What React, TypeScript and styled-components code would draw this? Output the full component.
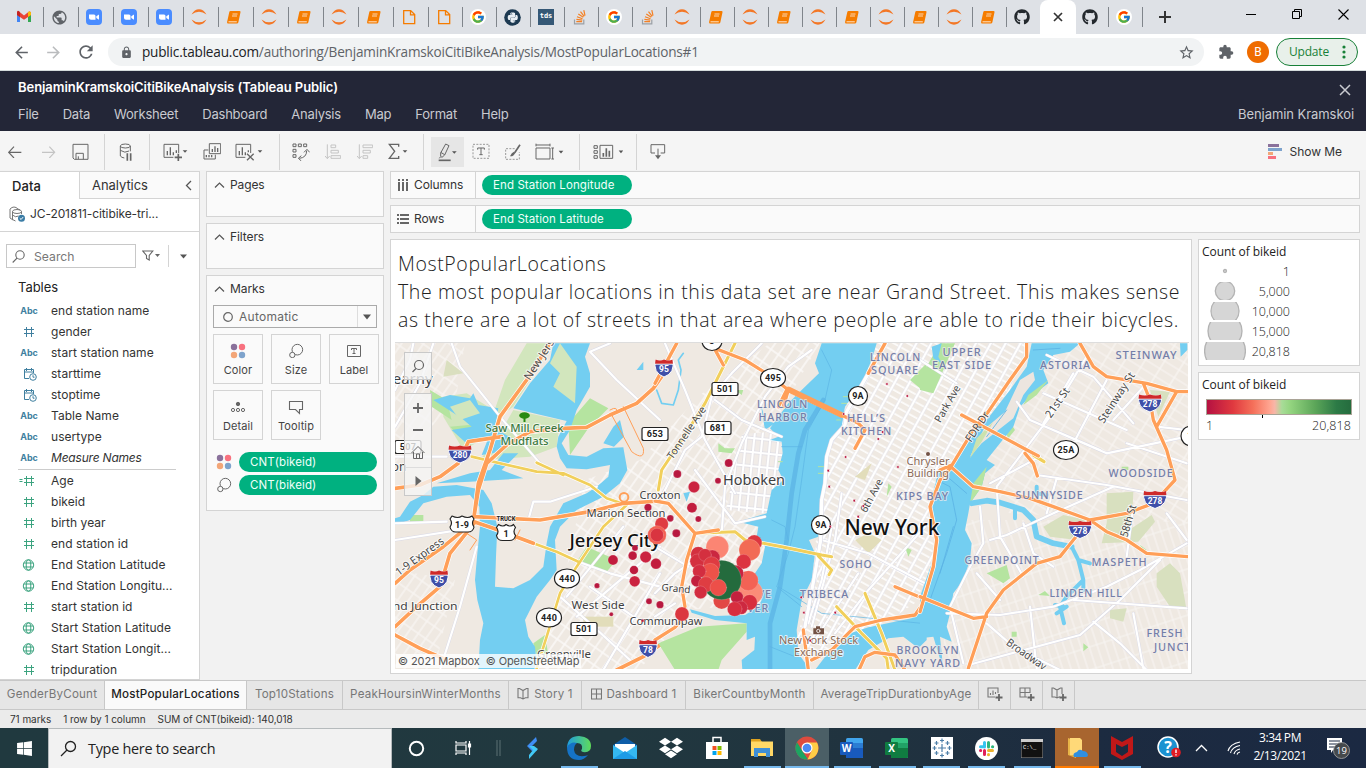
import React from 'react';
import styled, { createGlobalStyle } from 'styled-components';
import { FcGoogle } from 'react-icons/fc';
import { FaGithub, FaDropbox, FaPython, FaWindows } from 'react-icons/fa';
import { MdExtension, MdLock, MdRefresh, MdStarBorder, MdPublic, MdArrowBack, MdArrowForward } from 'react-icons/md';

const Global = createGlobalStyle`
  html, body { margin: 0; padding: 0; }
  body { width: 1366px; height: 768px; overflow: hidden; background: #f2f2f2; }
  * { box-sizing: border-box; }
  svg { display: block; flex: none; }
`;

const ui = `Inter, "Open Sans", sans-serif`;
const segoe = `"Open Sans", "Noto Sans", sans-serif`;

const Page = styled.div`
  width: 1366px; height: 768px; display: flex; flex-direction: column;
  font-family: ${ui}; font-size: 12px; color: #333; white-space: nowrap; overflow: hidden;
`;

/* ---------- browser chrome ---------- */
const TabStrip = styled.div`
  height: 34px; background: #dee1e6; display: flex; padding-left: 9px; flex: none;
`;
const BrowserTab = styled.div<{ $w: number; $sep: boolean }>`
  width: ${p => p.$w}px; height: 34px; padding-left: 7px; display: flex; align-items: center; flex: none;
  background: linear-gradient(#80858b, #80858b) right 0 top 7px / ${p => (p.$sep ? '1px 20px' : '0 0')} no-repeat;
`;
const ActiveTab = styled.div`
  width: 36px; height: 34px; margin-left: -1px; margin-right: -1px; background: #fff; border-radius: 8px 8px 0 0; flex: none;
  display: flex; align-items: center; justify-content: center;
`;
const PlusCell = styled.div`width: 44px; display: flex; align-items: center; justify-content: center; height: 34px;`;
const WindowControls = styled.div`
  margin-left: auto; display: flex; height: 28px; align-items: center;
  > span { width: 46px; display: flex; justify-content: center; }
`;
const TdsIcon = styled.span`
  width: 16px; height: 16px; background: #355876; color: #fff; font: 700 7px/15px "DejaVu Sans Mono", monospace; text-align: center;
`;
const AddressBar = styled.div`
  height: 37px; background: #fff; border-bottom: 1px solid #d5dcdc; display: flex; align-items: center; flex: none;
  padding-left: 12px; color: #5f6368;
`;
const NavIcon = styled.span<{ $w: number; $dim?: boolean }>`
  width: ${p => p.$w}px; display: flex; color: ${p => (p.$dim ? '#babcbe' : '#5f6368')};
`;
const UrlField = styled.div`
  width: 1096px; height: 28px; border-radius: 14px; background: #f1f3f4; display: flex; align-items: center;
  padding: 0 9px 0 12px; font: 13.6px ${segoe}; letter-spacing: -0.2px; color: #5f6368;
  b { font-weight: 400; color: #202124; }
  p { margin: 0 auto 1px 9px; }
`;
const ExtensionSlot = styled.span`padding-left: 14px;`;
const Avatar = styled.span`
  width: 22px; height: 22px; border-radius: 50%; background: #ef6c00; color: #fff; font: 12px/22px Roboto, sans-serif; text-align: center;
  margin: 0 7px 0 13px;
`;
const UpdateButton = styled.span`
  width: 82px; height: 28px; border: 1px solid #188038; border-radius: 14px; background: #e8f0ea; color: #188038;
  font: 12px/26px ${segoe}; letter-spacing: -0.2px; padding-left: 12px; display: flex; align-items: center; justify-content: space-between; padding-right: 11px;
`;

/* ---------- application header ---------- */
const Header = styled.header`
  height: 60px; background: #232637; flex: none; display: flex; justify-content: space-between; padding: 0 12px 0 18px;
`;
const HeaderTitle = styled.div`
  color: #fff; font-weight: 600; font-size: 13px; line-height: 17px; padding-top: 8px; letter-spacing: -0.06px;
`;
const Menu = styled.nav`
  display: flex; gap: 24px; color: #c9cad0; font-size: 13px; line-height: 18px; padding-top: 9px; letter-spacing: -0.22px;
`;
const HeaderRight = styled.div`
  color: #c9cad0; font-size: 13px; display: flex; flex-direction: column; align-items: flex-end; padding-top: 12px;
  line-height: 18px; letter-spacing: -0.06px;
  svg { margin: 1px 3px 9px 0; }
`;

/* ---------- toolbar ---------- */
const Toolbar = styled.div`
  height: 39px; background: #f5f5f5; display: flex; flex: none; align-items: center;
`;
const Tool = styled.div<{ $w: number; $active?: boolean }>`
  width: ${p => p.$w}px; height: 30px; margin-top: 2px; display: flex; align-items: center; justify-content: center; flex: none;
  background: ${p => (p.$active ? '#e6e6e6' : 'transparent')};
`;
const Divider = styled.div<{ $w: number }>`
  width: ${p => p.$w}px; height: 36px; margin-top: 3px; border-right: 1px solid #d4d4d4; flex: none;
`;
const ShowMe = styled.div`
  margin-left: auto; margin-right: 24px; margin-top: 2px; display: flex; gap: 8px; align-items: center; font-size: 12px; color: #333; letter-spacing: -0.05px;
`;

/* ---------- work area ---------- */
const Work = styled.div`height: 510px; background: #f2f2f2; display: flex; flex: none; padding-top: 1px;`;

const DataPane = styled.aside`
  width: 200px; height: 509px; background: #fff; border: solid #d4d4d4; border-width: 0 1px 1px 0; flex: none;
`;
const PaneTabs = styled.div`display: flex; height: 28px; border-top: 1px solid #d4d4d4; font-size: 13px;`;
const PaneTab = styled.div<{ $on?: boolean }>`
  width: ${p => (p.$on ? 79 : 120)}px; line-height: 26px; color: ${p => (p.$on ? '#222' : '#333')};
  letter-spacing: ${p => (p.$on ? 0.1 : -0.05)}px;
  font-weight: ${p => (p.$on ? 500 : 400)};
  padding: 0 ${p => (p.$on ? 0 : 7)}px 0 ${p => (p.$on ? 12 : 12)}px;
  background: ${p => (p.$on ? '#fff' : '#fafafa')};
  border: solid #d4d4d4; border-width: ${p => (p.$on ? '0' : '0 0 1px 1px')};
  display: flex; justify-content: space-between; align-items: center;
`;
const SourceRow = styled.div`
  height: 33px; border-bottom: 1px solid #d4d4d4; display: flex; align-items: center; padding: 0 0 3px 9px; gap: 4px;
  font-size: 12px; color: #333; letter-spacing: -0.1px;
`;
const SearchRow = styled.div`height: 48px; display: flex; align-items: center; padding-left: 6px;`;
const SearchBox = styled.div`
  width: 130px; height: 24px; border: 1px solid #c8c8c8; display: flex; align-items: center; padding-left: 5px; gap: 9px;
  color: #777; font-size: 12.2px; margin-right: 6px;
`;
const Stroke = styled.span`width: 1px; height: 22px; background: #d4d4d4; margin: 0 11px 0 8px;`;
const TablesTitle = styled.div`padding-left: 18px; font-size: 13px; height: 20px; line-height: 15px; color: #222; letter-spacing: -0.05px;`;
const Field = styled.div<{ $italic?: boolean }>`
  height: 21px; display: flex; align-items: center; font-size: 12px; color: #333; letter-spacing: ${p => (p.$italic ? -0.2 : 0.04)}px;
  font-style: ${p => (p.$italic ? 'italic' : 'normal')};
  > span:first-child { width: 51px; padding-left: 19px; display: flex; flex: none; }
`;
const Abc = styled.b`
  width: 20px; text-align: center; font: 700 9px/12px ${ui}; color: #3f7f9f; letter-spacing: -0.1px; font-style: normal;
`;
const FieldRule = styled.div`margin: 1px 23px 0 18px; height: 1px; background: #ccc; `;

const Cards = styled.div`width: 178px; margin-left: 6px; display: flex; flex-direction: column; gap: 6px; flex: none;`;
const Card = styled.section<{ $h: number }>`
  height: ${p => p.$h}px; border: 1px solid #d4d4d4; background: #fafafa; flex: none;
`;
const CardTitle = styled.div`
  display: flex; align-items: center; gap: 5px; height: 26px; padding: 0 0 1px 7px; font-size: 12px; color: #333; letter-spacing: -0.1px;
`;
const MarkType = styled.div`
  width: 164px; height: 23px; margin: 3px 0 6px 6px; border: 1px solid #aaa; display: flex; align-items: center; font-size: 12px;
  color: #666; padding-left: 9px; gap: 6px; letter-spacing: 0.25px; background: #fafafa;
`;
const DropCell = styled.span`
  margin-left: auto; width: 19px; height: 21px; border-left: 1px solid #ddd; display: flex; align-items: center; justify-content: center;
`;
const MarkGrid = styled.div`display: grid; grid-template-columns: repeat(3, 50px); gap: 6px 8px; padding-left: 6px;`;
const MarkButton = styled.div`
  height: 50px; border: 1px solid #d4d4d4; background: #fafafa; display: flex; flex-direction: column; align-items: center; justify-content: space-between;
  padding: 8px 0 4px; font-size: 11px; line-height: 18px; color: #444; letter-spacing: 0.1px;
`;
const MarkPills = styled.div`padding: 12px 0 0 9px; display: flex; flex-direction: column; gap: 3px;`;
const MarkPillRow = styled.div`display: flex; gap: 7px; align-items: center; height: 20px;`;
const Pill = styled.div<{ $w: number }>`
  width: ${p => p.$w}px; height: 20px; border-radius: 10px; background: #00b180; color: #f0fffa; line-height: 21px; padding-left: 11px;
  letter-spacing: 0.1px; font-size: 11.5px;
`;

const Main = styled.div`width: 970px; margin-left: 6px; display: flex; flex-direction: column; gap: 6px;`;
const Shelf = styled.div`height: 28px; border: 1px solid #d4d4d4; background: #fafafa; display: flex; align-items: center;`;
const ShelfName = styled.div`
  width: 85px; height: 26px; border-right: 1px solid #d4d4d4; display: flex; align-items: center; padding: 0 0 1px 6px; gap: 4px; margin-right: 6px;
  font-size: 12px; letter-spacing: -0.1px;
`;
const Canvas = styled.div`display: flex; gap: 6px;`;
const Sheet = styled.div`width: 802px; height: 435px; border: 1px solid #d4d4d4; background: #fff; padding: 10px 0 0 4px;`;
const SheetTitle = styled.div`
  font: 300 19.5px/28px "Open Sans", sans-serif; color: #222; padding-left: 3px; height: 92px; letter-spacing: 0.61px;
`;
const MapBox = styled.div`width: 794px; height: 327px; position: relative; border-top: 1px solid #ddd;`;
const MapTools = styled.div`position: absolute; left: 9px; top: 9px; display: flex; flex-direction: column; gap: 13px;`;
const MapToolGroup = styled.div<{ $h: number }>`
  width: 28px; height: ${p => p.$h}px; background: rgba(245,245,245,.8); border: 1px solid #c9c9c9;
`;
const Credits = styled.div`
  position: absolute; left: 1px; bottom: 1px; height: 14px; background: rgba(255,255,255,.8); color: #555; font-size: 11px; line-height: 14px;
  padding: 0 3px 0 2px; width: 185px; letter-spacing: -0.1px; white-space: pre;
`;
const Legends = styled.div`width: 162px; display: flex; flex-direction: column; gap: 6px;`;
const Legend = styled.div<{ $h: number }>`
  height: ${p => p.$h}px; border: 1px solid #d4d4d4; background: #fff; padding: 3px 0 0 3px; color: #222;
`;
const LegendTitle = styled.div`height: 18px; font: 12px/17px "Open Sans", sans-serif; letter-spacing: -0.05px;`;
const SizeRow = styled.div`
  height: 20px; display: flex; align-items: center; padding-left: 2px; font: 300 12.5px "Open Sans", sans-serif; color: #222;
  span { width: 44px; text-align: right; }
`;
const Ramp = styled.div`
  width: 146px; height: 16px; margin: 5px 0 0 4px; border: 1px solid #a9a396;
  background: linear-gradient(90deg, #b51142, #e0393f 18%, #f5705a 32%, #ffa793 44%, #f7b6a8 47%, #a8dc98 52%, #93d47f 58%, #5ca659 75%, #2c7a46 90%, #256c3e);
`;
const RampLabels = styled.div`
  display: flex; justify-content: space-between; width: 145px; margin-left: 4px; font: 300 12.5px/16px "Open Sans", sans-serif; color: #222; letter-spacing: 0.1px;
`;

/* ---------- sheet tabs and status ---------- */
const SheetTabs = styled.div`
  height: 30px; background: #e6e6e6; border: solid #c8c8c8; border-width: 1px 0; display: flex; flex: none;
`;
const SheetTab = styled.div<{ $w: number; $on?: boolean }>`
  width: ${p => p.$w}px; border-right: 1px solid #c8c8c8; display: flex; align-items: center; justify-content: center; gap: 5px; flex: none;
  font-size: 11.6px; letter-spacing: 0.2px; padding-bottom: 2px;
  font-weight: ${p => (p.$on ? 500 : 400)};
  color: ${p => (p.$on ? '#222' : '#777')}; background: ${p => (p.$on ? '#fafafa' : 'transparent')};
`;
const Status = styled.div`
  height: 18px; background: #ebebeb; display: flex; gap: 12px; padding-left: 10px; font-size: 10px; line-height: 18px; color: #333; flex: none;
  letter-spacing: -0.05px;
`;

/* ---------- desktop taskbar ---------- */
const Taskbar = styled.footer`
  height: 40px; flex: none; display: flex; color: #fff; font-family: ${segoe};
  background: linear-gradient(90deg, #20393f, #21383f 45%, #20323f 65%, #1c2b40 80%, #1b2942);
`;
const Task = styled.div<{ $w: number; $bg?: string; $line?: string }>`
  width: ${p => p.$w}px; height: 40px; display: flex; align-items: center; justify-content: center; flex: none;
  background: ${p => p.$bg ?? 'transparent'};
  background-image: ${p => (p.$line ? `linear-gradient(${p.$line}, ${p.$line})` : 'none')};
  background-size: ${p => (p.$bg ? '100%' : '37px')} 2px; background-position: center bottom; background-repeat: no-repeat;
`;
const TaskSearch = styled.div`
  width: 344px; height: 40px; background: #f2f2f2; border: 1px solid #b5babc; border-bottom: 0; display: flex; align-items: center; flex: none;
  color: #222; font-size: 14.4px; padding-left: 11px; gap: 11px; letter-spacing: -0.27px;
`;
const Clock = styled.div`
  width: 58px; font-size: 12px; line-height: 18px; text-align: center; padding-top: 1px; letter-spacing: -0.4px; margin-left: -8px; flex: none;
`;

/* Icon drawn on a 3x grid: the box is in grid units, the result a third of it. */
const Glyph = ({ box, children, color = '#666', sw = 3 }: { box: [number, number, number, number]; children: React.ReactNode; color?: string; sw?: number }) => (
  <svg width={box[2] / 3} height={box[3] / 3} viewBox={box.join(' ')} fill="none" stroke={color} strokeWidth={sw}>{children}</svg>
);
const Caret = ({ x, y, s = 7 }: { x: number; y: number; s?: number }) => (
  <path d={`M${x - s} ${y - s / 2}h${2 * s}l${-s} ${s + 1}z`} fill="#555" stroke="none" />
);

const Jupyter = () => (
  <svg width="16" height="16" viewBox="0 0 16 16" fill="#f37726"><path d="M.5 5.5Q3.5.3 8 .3T15.500 5.500Q12 2.700 8 2.700T.5 5.500zM.5 10.500Q4 13.300 8 13.300T15.500 10.500Q12.500 15.700 8 15.700T.5 10.500z" /></svg>
);
const Notebook = () => (
  <svg width="16" height="16" viewBox="0 0 16 16"><path d="M4.500 2h9q1.300 0 1 1.200L12.300 13.500q-.3 1-1.300 1H2.200q-1.400 0-1.100-1.500L3.300 3q.2-1 1.200-1z" fill="#f57c00" /><path d="M6.500 5h5M6 7h5" stroke="#fff" strokeWidth=".7" /><path d="M2.500 12.800h8.300" stroke="#fff" strokeWidth=".8" /></svg>
);
const PageIcon = () => (
  <svg width="16" height="16" viewBox="0 0 16 16" fill="none" stroke="#f57c00" strokeWidth="1.300"><path d="M2.700 1.600h7l4 4v9H2.700zM9.500 1.600v4.300h4.300" /></svg>
);
const ZoomIcon = () => (
  <svg width="16" height="16" viewBox="0 0 16 16"><rect width="16" height="16" rx="4" fill="#4a8cff" /><path d="M3 5.500h5q1.500 0 1.500 1.500v3.700H5Q3 10.700 3 9zM10.300 7.300l2.700-1.800v5.200l-2.700-1.800z" fill="#fff" /></svg>
);
const Gmail = () => (
  <svg width="16" height="16" viewBox="0 0 16 16"><path d="M1 4v9h3V7z" fill="#4285f4" /><path d="M12 7v6h3V4z" fill="#34a853" /><path d="M1 4q0-2 2-1.500L8 6.500l5-4q2-.5 2 1.500v2L8 10.700 1 6z" fill="#ea4335" /><path d="M12 3.300l1-.8q2-.5 2 1.500v2l-3 2z" fill="#fbbc04" /><path d="M1 4v2l3 2V3.300Q1-.0 1 4z" fill="#c5221f" /></svg>
);
const StackOverflow = () => (
  <svg width="16" height="16" viewBox="0 0 16 16" fill="none" strokeWidth="1.200"><path d="M2.500 10.500v4.300h9.300v-4.300" stroke="#9ba0a5" /><path d="M4.300 12.700h5.800M4.400 10.400l5.900.7M5 7.700l5.500 2M6.300 5l5 3.300M8.500 2.700l3.700 4.600M11.800 1.200l1.200 5.500" stroke="#f48024" /></svg>
);
const PythonBadge = () => (
  <svg width="17" height="17" viewBox="0 0 17 17"><circle cx="8.500" cy="8.500" r="8.300" fill="#1d3a52" /><g transform="translate(3 2.800) scale(.68)" color="#e8eef3"><FaPython size={17} /></g></svg>
);
const GoogleBadge = () => (
  <svg width="16" height="16" viewBox="0 0 16 16"><circle cx="8" cy="8" r="8" fill="#fff" /><g transform="translate(1 1)"><FcGoogle size={14} /></g></svg>
);
const favicons: Record<string, React.ReactNode> = {
  m: <Gmail />, w: <MdPublic size={17} color="#5f6368" />, z: <ZoomIcon />, j: <Jupyter />, b: <Notebook />, f: <PageIcon />, g: <GoogleBadge />,
  p: <PythonBadge />, t: <TdsIcon>tds</TdsIcon>, s: <StackOverflow />, h: <FaGithub size={16} color="#24292e" />,
};

const SizeGlyph = () => (
  <Glyph box={[864, 526, 48, 46]} color="#666"><circle cx="892" cy="546" r="16" /><circle cx="877" cy="562" r="8" fill="#fafafa" /></Glyph>
);
const ColorGlyph = () => (
  <svg width="16" height="16" viewBox="0 0 16 16"><circle cx="4" cy="4" r="3.200" fill="#8a719b" /><circle cx="12" cy="4" r="3.200" fill="#f8717f" /><circle cx="4" cy="12" r="3.200" fill="#f3a678" /><circle cx="12" cy="12" r="3.200" fill="#7ea3cc" /></svg>
);
const Hash = ({ c, calc }: { c: string; calc?: boolean }) => (
  <svg width="20" height="14" viewBox="0 0 20 14" fill="none" stroke={c} strokeWidth="1"><path d="M5 4.500h10M5 8.500h10M7.500 2v10M12.500 2v10" />{calc && <path d="M.5 5.500h3M.5 7.500h3" />}</svg>
);
const GlobeGlyph = () => (
  <svg width="20" height="14" viewBox="0 0 20 14" fill="none" stroke="#3ba37f" strokeWidth="1"><circle cx="9.500" cy="7" r="5.200" /><ellipse cx="9.500" cy="7" rx="2.300" ry="5.200" /><path d="M5 5h9M5 9h9" /></svg>
);
const DateGlyph = () => (
  <svg width="20" height="14" viewBox="0 0 20 14" fill="none" stroke="#3f7f9f" strokeWidth="1"><path d="M10 11.500H5.500v-9h9V6M5.500 5h9M7.500 1v3M12.500 1v3" /><circle cx="14" cy="10" r="3.300" /><path d="M14 8.200v2h1.500" /></svg>
);
const ChevronUp = () => <svg width="11" height="8" viewBox="0 0 11 8" fill="none" stroke="#555" strokeWidth="1.200"><path d="M1 6.500l4.500-4.500L10 6.500" /></svg>;

const dims: [string, string][] = [
  ['a', 'end station name'], ['#', 'gender'], ['a', 'start station name'], ['d', 'starttime'], ['d', 'stoptime'], ['a', 'Table Name'], ['a', 'usertype'], ['i', 'Measure Names'],
];
const measures: [string, string][] = [
  ['=', 'Age'], ['#', 'bikeid'], ['#', 'birth year'], ['#', 'end station id'], ['g', 'End Station Latitude'], ['g', 'End Station Longitu...'],
  ['#', 'start station id'], ['g', 'Start Station Latitude'], ['g', 'Start Station Longit...'], ['#', 'tripduration'],
];
const fieldIcon = (k: string, c: string) =>
  k === 'a' || k === 'i' ? <Abc>Abc</Abc> : k === 'd' ? <DateGlyph /> : k === 'g' ? <GlobeGlyph /> : <Hash c={c} calc={k === '='} />;

/* ---------- map ---------- */
const WATER = '#73cef1';
/* Three side-by-side map tiles, each digitised at three units per pixel. */
const Tile = ({ x, children }: { x: number; children: React.ReactNode }) => <g transform={`translate(${x} 340) scale(.33333)`}>{children}</g>;
const Roads = ({ d, c, w, edge = '#fff' }: { d: string; c: string; w: number; edge?: string }) => (
  <><path d={d} stroke={edge} strokeWidth={w + 4} /><path d={d} stroke={c} strokeWidth={w} /></>
);
const Streets = ({ d }: { d: string }) => (
  <><path d={d} stroke="#d9d9e6" strokeWidth={9} /><path d={d} stroke="#fff" strokeWidth={6.5} /></>
);
const OR = '#ff9f58', YE = '#f1cf5b';

type Label = [string, number, number, number, number, string, number?];
const labels: Label[] = [
  ['Jersey City', 615, 546.500, 91, 18.500, 'k'], ['Hoboken', 754, 485, 62, 15, 'd'], ['New York', 892, 535, 95, 21.500, 'k'],
  ['Marion Section', 626, 517, 79, 11.500, 'd'], ['Croxton', 660, 499, 41, 11, 'd'], ['West Side', 598, 609, 53, 11.500, 'd'], ['Greenville', 564, 658, 54, 11.500, 'd'],
  ['Communipaw', 666, 625, 73, 11.500, 'd'], ['Grand', 676, 592, 29, 10, 'd', 5], ['Kearny', 408, 384, 49, 14, 'd'], ['on', 399, 471, 15, 13, 'd'],
  ['Upland Junction', 412, 610, 91, 11.500, 'd'],
  ['Saw Mill Creek', 524.500, 432, 78, 11.500, 'g'], ['Mudflats', 524.500, 444.500, 48, 11.500, 'g'],
  ['LINCOLN', 782.500, 408, 51, 11, 'n'], ['HARBOR', 783, 421, 49, 11, 'n'], ['LINCOLN', 895.500, 360.500, 51, 11, 'n'], ['SQUARE', 895, 374, 48, 11, 'n'],
  ['UPPER', 962, 356, 39, 11, 'n'], ['EAST SIDE', 962, 369, 60, 11, 'n'], ['ASTORIA', 1065.500, 369, 51, 11, 'n'], ['STEINWAY', 1146.500, 359, 62, 11, 'n'],
  ['HELL’S', 866.500, 422, 39, 11, 'n'], ['KITCHEN', 866.500, 435, 51, 11, 'n'], ['KIPS BAY', 922.500, 500, 53, 11, 'n'], ['SUNNYSIDE', 1049.500, 499, 68, 11, 'n'],
  ['WOODSIDE', 1141, 477, 65, 11, 'n'], ['SOHO', 856, 567.500, 33, 11, 'n'], ['TRIBECA', 824.500, 598, 49, 11, 'n'], ['GREENPOINT', 1002, 564, 75, 11, 'n'],
  ['MASPETH', 1119.500, 566, 56, 11, 'n'], ['LINDEN HILL', 1086, 597, 73, 11, 'n'], ['FRESH', 1165, 637, 37, 11, 'n'], ['JUNCTION', 1184.500, 650.500, 61, 11, 'n'],
  ['BROOKLYN', 928, 654, 63, 11, 'n'], ['NAVY YARD', 928, 667, 66, 11, 'n'], ['GROVE', 752, 598, 40, 11, 'n'], ['RIVER', 752, 611.500, 34, 11, 'n'],
  ['Chrysler', 928, 464.500, 43, 11, 'b'], ['Building', 928, 477, 42, 11, 'b'], ['New York Stock', 818.500, 644, 79, 11, 'b'], ['Exchange', 818.500, 656, 49, 11, 'b'],
  ['New Jersey', 543, 358, 58, 11, 'r', -57], ['Tonnelle Ave', 687, 436, 61, 10.500, 'r', -56], ['1-9 Express', 420, 560, 57, 11, 'r', -36],
  ['6th Ave', 872, 499, 36, 10.500, 'r', -62], ['Park Ave', 948, 407, 41, 10.500, 'r', -60], ['FDR Dr', 978, 430, 34, 11, 'r', -56], ['21st St', 1058, 406, 34, 11, 'r', -55],
  ['Steinway St', 1117, 401, 58, 11, 'r', -57], ['58th St', 1129, 524, 33, 11, 'r', -74], ['Broadway', 1026, 658, 46, 11, 'r', 35],
  ['TRUCK', 506, 521, 19, 7.200, 't'],
];
const labelColor: Record<string, string> = { k: '#111', d: '#3f3f42', g: '#3d7a42', n: '#747ea8', b: '#8a6a58', r: '#4b4b4b', t: '#222' };

const shields: [string, number, number][] = [['95', 664, 368], ['280', 460, 454], ['95', 439, 579], ['78', 648, 648.500], ['278', 1150, 403], ['278', 1155, 499.500], ['278', 1080, 529.500]];
const ovals: [string, number, number, number][] = [['495', 773, 378, 12.500], ['440', 567, 578.500, 12.500], ['440', 549, 617.500, 12.500], ['9A', 858, 396, 9.500], ['9A', 821, 525, 9.500], ['25A', 1066, 450, 12.500], ['3', 712, 341, 10], ['1', 1190, 436, 9]];
const boxes: [string, number, number][] = [['501', 725, 389], ['681', 718, 428], ['653', 655, 434], ['501', 584, 629], ['507', 408, 447]];

const dots: [number, number, number, string][] = [
  [221, 369, 12, '#b8183f'], [67, 402, 12, '#b8183f'], [189, 422, 9, '#b8183f'], [117, 441, 17, '#cb2340'], [111, 503, 15, '#c21d3e'], [130, 537, 9, '#b8183f'], [46, 535, 10, '#b8183f'],
  [64, 580, 12, '#b8183f'], [20, 552, 20, '#df3c42'], [6, 585, 28, '#f26053'], [6, 585, 20, '#d93440'], [3, 671, 16, '#c21d3e'], [-21, 502, 11, '#b8183f'],
  [-60, 624, 9, '#b8183f'], [-67, 647, 13, '#bd1a3d'], [-28, 651, 17, '#cb2340'], [-126, 660, 15, '#c21d3e'], [-63, 690, 13, '#bd1a3d'], [-61, 724, 16, '#cb2340'],
  [-174, 737, 8, '#b8183f'], [-18, 784, 9, '#b8183f'], [-131, 823, 6, '#b8183f'], [-37, 842, 4, '#b8183f'], [15, 794, 11, '#b8183f'], [81, 822, 21, '#db3740'],
  [285, 758, 38, '#fb8c78'], [187, 622, 34, '#fb8573'], [298, 608, 23, '#dd3740'], [284, 630, 32, '#f26b55'], [266, 665, 22, '#dc3541'], [280, 722, 30, '#f36255'],
  [200, 782, 25, '#e24845'], [242, 700, 24, '#c9223f'], [130, 643, 23, '#d4303f'], [127, 664, 22, '#d4303f'], [172, 653, 23, '#cb2740'], [150, 645, 19, '#d4303f'],
  [200, 720, 59, '#246b3d'], [170, 675, 25, '#df3b41'], [166, 697, 27, '#ee5249'], [133, 694, 20, '#d32d40'], [125, 723, 17, '#c3203e'], [153, 733, 23, '#df3d42'],
  [190, 743, 25, '#ed4f49'], [137, 757, 19, '#d32d40'], [246, 772, 19, '#c3203e'], [284, 787, 23, '#d72e3e'], [258, 803, 20, '#cd2840'], [239, 807, 22, '#d72e3e'],
];
const specks = '696,132 757,168 566,222 683,276 670,297 572,351 729,381 520,392 523,440 598,482 625,498 610,530 526,560 439,772 447,818 541,818 466,902'.split(' ').map(s => s.split(',').map(Number));

const MapSvg = () => (
  <svg width="793" height="326" viewBox="395 343 793 326" fill="none" strokeLinejoin="round" strokeLinecap="round">
    <defs>
      <pattern id="manh" width="13" height="6.800" patternUnits="userSpaceOnUse" patternTransform="rotate(29)"><path d="M0 3h13" stroke="#fff" strokeWidth="1.500" strokeLinecap="butt" /><path d="M6 0v6.800" stroke="#dcdce8" strokeWidth="3" strokeLinecap="butt" /><path d="M6 0v6.800" stroke="#fff" strokeWidth="2.300" strokeLinecap="butt" /></pattern>
      <pattern id="hob" width="8" height="14" patternUnits="userSpaceOnUse" patternTransform="rotate(6)"><path d="M0 7h8M4 0v14" stroke="#d9d9e6" strokeWidth="2.800" strokeLinecap="butt" /><path d="M0 7h8M4 0v14" stroke="#fff" strokeWidth="2" strokeLinecap="butt" /></pattern>
      <pattern id="jc" width="15" height="9" patternUnits="userSpaceOnUse" patternTransform="rotate(-55)"><path d="M0 4h15M6 0v9" stroke="#fbf9f8" strokeWidth="1.500" /></pattern>
      <pattern id="qn" width="17" height="9" patternUnits="userSpaceOnUse" patternTransform="rotate(32)"><path d="M0 4h17M6 0v9" stroke="#f9f6f3" strokeWidth="1.200" /></pattern>
      <pattern id="bk" width="8" height="22" patternUnits="userSpaceOnUse" patternTransform="rotate(-18)"><path d="M0 6h8M4 0v22" stroke="#f8f5f2" strokeWidth="1.100" /></pattern>
    </defs>
    <rect x="395" y="343" width="793" height="326" fill="#efe9e2" />
    <path d="M585 480L640 460 700 395 770 343 820 343 770 430 790 600 690 610 640 669 535 669 560 600z" fill="url(#jc)" />
    <path d="M395 343h70l-10 60-60 60zM395 570l60 10-20 89h-40z" fill="url(#jc)" opacity=".7" />
    <path d="M1060 343h128v180l-180-10-30-60z" fill="url(#qn)" />
    <path d="M960 520h228v149H940z" fill="url(#bk)" />
    <path d="M742 434L785 431 780 515 726 510z" fill="#f1ece8" /><path d="M742 434L785 431 780 515 726 510z" fill="url(#hob)" />
    <path d="M876 343L866 360 846 383 838 410 826 452 822 480 816 540 808 600 796 640 820 660 845 650 915 603 935 560 930 500 950 465 1010 390 1027 343z" fill="url(#manh)" />

    <Tile x={390}>
      <g fill="#d2e6bd"><path d="M410 10H490L370 200 300 250 345 120zM500 10l75 60-10 125-80-60 20-50zM370 210l140 30-10 80-80 30-150 10 60-80z" /><path d="M160 170l70-10 80 50 20 60-110 60-60-100z" /></g>
      <path d="M170 60l50 40-60 10z" fill="#dadfbf" /><path d="M580 830h90v30h-90z" fill="#e2ddba" />
      <g fill="#b5e4a0"><path d="M535 250l65-75 55 30-60 60-55 80zM120 150l50 30 15 60-60-40zM180 260l110-10-20 45-60-5zM590 620l90 40-30 35-90-30zM430 910l35-25 10 60-30 30zM60 525h40v20H60z" /></g>
      <path fill={WATER} d="M490 10L480 60 420 130 370 205 440 222 530 243 505 290 500 320 510 355 530 385 590 388 660 375 655 410 620 440 590 460 520 490 480 560 470 610 460 680 420 720 370 745 315 740 318 650 322 560 305 490 280 450 200 435 130 440 100 465 60 485 30 530 15 535V555L60 540 100 490 170 470 240 465 268 500 270 560 262 640 255 720 262 780 280 850 270 900 265 990H442L435 920 415 890 405 840 440 770 480 720 500 690 495 600 510 560 560 510 640 470 690 430 712 390 705 350 700 322 640 325 590 350 535 345 515 310 540 270 560 210 600 140 600 100 585 50 600 10z" />
      <path fill={WATER} d="M130 180l50-15 60 10 10-15 15 35 60 10-10 60 50 30-30 40-60 10 20-50-60 20-50-45 60-10-30-25z" />
      <path fill={WATER} d="M240 400l60-10 40-50 45 0-50 50 65 25-160 10-100 5zM640 310l30-50 20-20 12 50-30 30zM740 90l20-25v25z" />
      <path fill="#d2e6bd" d="M510 10l50 70-5 110-65-50 20-40-30-30zM180 200l60-20 30 40-60 20z" />
      <Streets d="M185 10L210 80 330 230 450 370M130 10L90 130 15 260M15 350L170 350M15 550L170 545M15 600L240 565M260 620L210 800 150 990M430 485H480L620 440M430 485L415 540M565 665L660 700 810 740M600 35L680 120 810 240M600 35L660 10M530 770L700 560M560 830L810 620M640 990L810 700M510 770L600 850 720 960M600 740L760 850M15 150L60 60 70 10" />
      <Roads c={YE} w={8} d="M245 350L440 395 520 400 600 435 650 475 710 495 640 560 600 620 560 680 510 760 470 890 440 985M440 368L520 405M430 610L500 635 565 665" />
      <Roads c={OR} w={11} d="M480 10L410 120 330 230 300 330 265 430 252 530 265 450 290 370 350 315 420 275 520 265 590 262 660 225 740 190 790 145 815 110M15 445L90 435 150 410 205 370 235 305 335 290M252 530L450 540 600 515 700 490 810 483M252 545L310 565 430 610M252 545L160 620 60 690 15 730M252 550L180 640 150 740 80 800 15 860M15 885L90 925 170 960M680 990L760 950 810 915" />
      <circle cx="702" cy="472" r="13" stroke={OR} strokeWidth="6" />
      <path d="M660 210q25-15 20 10M665 225l60 110q40 30 35-10L700 200M210 610l20-30 30 20-20 30M375 600l15-30" stroke={OR} strokeWidth="3" />
    </Tile>
    <Tile x={655}>
      <g fill="#b5e4a0"><path d="M10 910L130 860 275 850V875L200 960 190 990H60zM190 310l20 15 30 0-10 15-40-5zM765 120l50-50v65l-20 10zM700 430l10 10-15 30zM750 620l20 10-10 20zM240 150l25 0-5 15z" /></g>
      <path d="M600 600l40-20 40 20-40 40zM600 410l50-40-20 50z" fill="#e2ddba" />
      <path fill={WATER} d="M500 10L480 70 492 100 440 150 400 190 345 265 370 290 345 300 380 305 383 340 370 390 385 420 350 450 335 520 300 530 250 545 310 560 305 590 330 620 320 670 300 700 320 780 310 800 270 825 180 828 105 808 110 818 180 840 275 850 275 900 300 890 298 930 260 960 262 990H465L430 940 425 870 440 780 470 720 480 640 462 600 490 590 495 480 510 430 515 340 530 290 560 260 570 200 620 130 650 60 665 10z" />
      <path fill={WATER} d="M480 990L530 925 570 885 640 862 770 835 815 790V900L790 925 745 890 700 895 640 930 600 990zM85 460l20-5-10 30zM315 180l15 60 30 10-30 20z" />
      <path stroke={WATER} strokeWidth="5" d="M85 40L70 60 78 90 70 150 55 195 20 190 5 150" />
      <path stroke="#5bb3e4" strokeWidth="14" opacity=".75" d="M505 180L450 270 430 340 410 460 395 600 375 740 345 850 345 990" />
      <path stroke="#5bb3e4" strokeWidth="2.500" d="M500 30L530 90 510 180 460 270 440 420 420 560 400 640 365 740 440 800M345 920L420 950M370 740L500 820 800 850M380 320l60 0M350 540l40 20 10 40" opacity=".8" />
      <path stroke="#b5e4a0" strokeWidth="3" d="M565 170h15M560 190h15M490 380h20M490 400h20M545 240h12M370 365h12" />
      <Streets d="M30 10L90 150 150 300 240 460M320 10L230 100 170 170 140 290 90 330 20 470M470 30L400 80 330 170 260 310 210 440 200 580M180 180L260 240 380 290M120 390L240 550 330 530M0 620L100 680M0 760L60 700 120 660M0 830L60 790M500 600L640 640 810 730M560 460L540 600 470 860M530 560L500 720 460 850M610 700L480 900M810 560L640 750 540 880" />
      <path d="M640 100L575 215 570 255 530 300 515 350 510 430 500 480 497 600 480 700 450 860" stroke="#d9d9e6" strokeWidth="13" />
      <path d="M640 100L575 215 570 255 530 300 515 350 510 430 500 480 497 600 480 700 450 860" stroke="#fff" strokeWidth="10" />
      <Roads c={YE} w={9} d="M240 10L200 90 150 190 80 300 20 390 10 450M120 580L240 575 270 600 380 620 500 645 530 650M490 648L530 690 522 704M545 800L620 880 695 955 700 990M630 760L680 880 720 990" />
      <Roads c={OR} w={10} d="M0 130L65 10M175 20L205 75M180 25L270 60 350 110 400 150 560 225 610 250 630 270 600 325M395 150L370 200M400 150L385 200M0 483L40 490 120 580 190 570M120 580L95 660 80 740 90 800M690 10L640 100M445 870L460 990M470 960L530 930 600 860 680 840 780 825 812 780M720 740L815 780M612 990L630 950 660 937 720 945 750 990M0 900L60 862 90 830" />
      <path d="M400 148L560 225" stroke={OR} strokeWidth="17" />
      <g fill="#735244"><path d="M475 865h32v18h-32zM483 859h12v6h-12z" /></g><circle cx="490" cy="873" r="5" stroke="#fff" strokeWidth="2.500" />
    </Tile>
    <Tile x={920}>
      <path d="M0 115L60 10H105L40 160 0 150z" fill="#b5e4a0" /><path d="M35 20l30-10-10 40 10 20-25-15z" fill={WATER} />
      <g fill="#d8e0bf"><path d="M370 560L430 525 500 540 470 600 390 590zM560 460l80-5-5 110 60-40 10 20-50 60-110 5 15-60zM690 150l60 5-35 75zM710 700l40-30 30 30 20 110-50-10-40-60zM570 810l50-5-10 40-40-10z" /></g>
      <g fill="#b5e4a0"><path d="M200 700l60-25 10 40-20 15zM255 275l20-20 10 15-20 25zM355 765l20-12 15 15zM490 910l15 12-15 12zM275 875h15v15h-15zM605 380h20v10h-20zM660 615l20 15-15 0z" /></g>
      <path fill={WATER} d="M335 10H480L450 35 400 45 370 90 385 130 330 170 300 200 280 260 240 310 200 360 225 375 195 400 185 440 150 490 145 520 135 570 155 610 150 660 130 720 100 760 90 820 80 860 95 905 60 890 70 990 40 890 0 895V770L25 700 38 660 58 600 35 540 30 490 55 400 90 380 130 310 200 240 270 150 320 80zM780 10h22v20l-20 20z" />
      <path d="M340 95L300 120 255 215 190 270 150 350 185 310 280 235 310 165 345 120z" fill="#ece5df" /><path d="M150 355l35-50 35-60-50 50z" fill="#cbe2ae" />
      <path d="M385 120l-60 45-15 30 40-30z M160 430l40-50-15 60-35 50z" fill="#b5e4a0" />
      <path stroke={WATER} strokeWidth="17" d="M155 490L200 482 240 488 310 510 340 540 350 590 400 610 455 620" />
      <path stroke={WATER} strokeWidth="12" d="M455 620L475 660 490 720 440 770 420 800 432 850M475 660l35 10M490 720v30M430 800l-25-5M350 440v20l30 5M285 510v25M410 820l30-20" />
      <path stroke="#5bb3e4" strokeWidth="2.500" d="M50 420L90 440 110 540 80 640 30 780M70 400L140 460M340 30L420 25M260 210L200 290M100 560L60 700" />
      <Streets d="M290 185L330 240 560 340 800 290M380 45L520 110 640 250M500 50L390 230 230 440 240 590 310 710M210 430L360 350M350 405L560 435 800 480M580 440L400 520 260 585 210 600M410 415L380 520M180 500L190 610 150 680 90 800 130 970M80 820L240 825 400 800 560 740 660 690 800 610M200 850L280 920 420 990M145 975L480 885 600 780 720 660M460 780L800 805M330 800L350 985M520 845L600 910 680 990M580 240L680 130M620 310L800 370M0 60L110 130M170 700L240 780M310 550L340 640 400 680M640 820l30 165M640 500L620 650M460 100L370 250M560 120L450 330M330 240L540 330M370 160L620 270M710 260L800 270M740 520L800 600" />
      <Roads c={YE} w={10} d="M340 345L372 365" />
      <Roads c={OR} w={10} d="M320 10L320 50 270 120 205 215 160 270 90 385 60 420 30 500 50 600 40 680 0 815M60 390L95 375M125 225L355 348M315 340L340 370 352 408M90 378L160 440 240 455 330 475 400 500 510 540 560 575 620 600 680 640 802 650M510 540L620 520 700 490 765 420 740 330 700 240 690 180 670 130M480 10L520 80 560 110 680 130 770 155 802 155M770 155L710 260M510 540L460 600 420 650 350 670 250 750 200 820 145 985M0 770L160 835 200 830" />
      <circle cx="24" cy="342" r="6" fill="#735244" />
    </Tile>

    {labels.map(([t, x, y, w, s, k, r], i) => (
      <text key={i} x={x} y={y} fontSize={s} textAnchor="middle" textLength={w} lengthAdjust="spacingAndGlyphs" transform={r ? `rotate(${r} ${x} ${y - 3})` : undefined} fill={labelColor[k]}
        fontFamily={k === 't' ? 'Roboto, sans-serif' : '"Noto Sans", "Open Sans", sans-serif'} fontWeight={k === 't' ? 700 : k === 'n' || k === 'g' || k === 'k' ? 500 : 400} letterSpacing={k === 'n' ? 0.9 : 0}
        stroke={k === 'n' ? 'rgba(240,236,236,.7)' : 'rgba(255,255,255,.75)'} strokeWidth="2" paintOrder="stroke">{t}</text>
    ))}
    <g fill="#2a8a12"><ellipse cx="524.500" cy="415.500" rx="5.300" ry="3.300" /><path d="M523.500 417h2v5h-2z" /></g>
    {boxes.map(([t, x, y], i) => (
      <g key={i}><rect x={x - 13} y={y - 6.500} width="26" height="13" rx="2" fill="#fff" stroke="#222" strokeWidth="1.200" />
        <text x={x} y={y + 3.300} fontSize="9" fontWeight="700" fill="#222" textAnchor="middle" fontFamily="Roboto, sans-serif" letterSpacing=".3">{t}</text></g>
    ))}
    {ovals.map(([t, x, y, rx], i) => (
      <g key={i}><ellipse cx={x} cy={y} rx={rx} ry="9.500" fill="#fff" stroke="#222" strokeWidth="1.200" />
        <text x={x} y={y + 3.300} fontSize="9" fontWeight="700" fill="#222" textAnchor="middle" fontFamily="Roboto, sans-serif" letterSpacing=".2">{t}</text></g>
    ))}
    {([['1-9', 462, 524, 12], ['1', 506, 532.500, 9.500]] as [string, number, number, number][]).map(([t, x, y, w], i) => (
      <g key={i}><path d={`M${x - w + 2} ${y - 8}q${w / 2} 3 ${w - 2} 0q${w / 2} 3 ${w - 2} 0l2 3q-3 4 0 8q-1 5-6 5h-${2 * w - 12}q-5 0-6-5q3-4 0-8z`} fill="#fff" stroke="#222" strokeWidth="1.200" />
        <text x={x} y={y + 4} fontSize="9" fontWeight="700" fill="#222" textAnchor="middle" fontFamily="Roboto, sans-serif">{t}</text></g>
    ))}
    {shields.map(([t, x, y], i) => {
      const w = t.length > 2 ? 12 : 9.500;
      return (
        <g key={i}><path d={`M${x - w + 1} ${y - 8}q${w / 2} 2 ${w - 1} 0q${w / 2} 2 ${w - 1} 0q3 13-${w - 1} 17q-${w + 2}-4-${w - 1}-17z`} fill="#3f4fa8" stroke="#fff" strokeWidth="1" />
          <path d={`M${x - w + 1} ${y - 8.500}q${w / 2} 2 ${w - 1} 0q${w / 2} 2 ${w - 1} 0l.4 4.500H${x - w + .6}z`} fill="#cf2a2a" />
          <path d={`M${x - w + .5} ${y - 3.800}h${2 * w - 1}`} stroke="#fff" strokeWidth=".9" />
          <text x={x} y={y + 4.300} fontSize="8.500" fontWeight="700" fill="#fff" textAnchor="middle" fontFamily="Roboto, sans-serif">{t}</text></g>
      );
    })}
    <Tile x={655}>
      {dots.map(([x, y, r, c], i) => <circle key={i} cx={x} cy={y} r={r} fill={c} stroke="#fff" strokeOpacity=".25" strokeWidth="2" />)}
      {specks.map(([x, y], i) => <circle key={i} cx={x} cy={y} r="4" fill="#b8183f" stroke="#fff" strokeWidth="1.500" />)}
    </Tile>
  </svg>
);

const AppToolbar = () => (
  <Toolbar>
    <Tool $w={30}><Glyph box={[26, 436, 42, 36]} sw={3.500}><path d="M66 455H29M44 438L28 455l16 17" /></Glyph></Tool>
    <Tool $w={38}><Glyph box={[126, 436, 42, 36]} color="#c4c4c4" sw={3.500}><path d="M126 455h37M148 438l16 17-16 17" /></Glyph></Tool>
    <Tool $w={26}><Glyph box={[217, 430, 52, 50]}><path d="M220 434h45v45h-41l-4-4zM229 479v-18h22v18M236 470v8" /></Glyph></Tool>
    <Divider $w={11} />
    <Tool $w={42}><Glyph box={[358, 430, 40, 54]}><ellipse cx="377" cy="439" rx="15" ry="6" /><path d="M362 439v30q4 5 12 6M392 439v16M362 452q14 10 26 2" /><path d="M383 461v22M393 461v22" strokeWidth="5" /></Glyph></Tool>
    <Divider $w={3} />
    <Tool $w={51}><Glyph box={[491, 430, 75, 54]}><path d="M522 473h-28v-39h44v26" /><path d="M504 467v-13M513 467v-24M522 467v-9M531 460v-8" strokeWidth="4" /><path d="M537 462v22M526 473h22" strokeWidth="5" /><Caret x={557} y={455} /></Glyph></Tool>
    <Tool $w={22}><Glyph box={[608, 426, 56, 56]}><path d="M627 431h34v30h-34zM624 450h-13v27h34v-13" /><path d="M636 456v-9M644 456v-17M652 456v-12M618 472v-7M626 472v-7M634 472v-7" strokeWidth="4" /></Glyph></Tool>
    <Tool $w={52}><Glyph box={[707, 430, 82, 54]}><path d="M738 473h-28v-39h44v26" /><path d="M720 467v-13M729 467v-24M738 467v-9M747 458v-6" strokeWidth="4" /><path d="M743 462l20 20M763 462l-20 20" strokeWidth="4" /><Caret x={782} y={455} /></Glyph></Tool>
    <Divider $w={5} />
    <Tool $w={42}><Glyph box={[877, 430, 52, 54]}><path d="M880 433h9v8h-9zM896 433h9v8h-9zM912 433h9v8h-9zM880 449h9v8h-9zM880 465h9v8h-9zM921 453q0 21-22 23M913 458l9-9 8 9M905 468l-9 8 9 8" /></Glyph></Tool>
    <Tool $w={22}><Glyph box={[974, 430, 50, 54]} color="#c4c4c4"><path d="M981 434v42M974 469l7 8 7-8M992 436h14v8h-14zM992 452h22v8h-22zM992 468h29v8h-29z" /></Glyph></Tool>
    <Tool $w={42}><Glyph box={[1069, 430, 50, 54]} color="#c4c4c4"><path d="M1076 434v42M1069 469l7 8 7-8M1087 436h29v8h-29zM1087 452h22v8h-22zM1087 468h14v8h-14z" /></Glyph></Tool>
    <Tool $w={24}><Glyph box={[1166, 430, 58, 50]}><path d="M1198 441v-7h-28l16 21-16 21h28v-7" strokeWidth="4" /><Caret x={1217} y={455} /></Glyph></Tool>
    <Divider $w={14} />
    <Tool $w={7} />
    <Tool $w={33} $active><Glyph box={[1312, 424, 58, 60]}><path d="M1335 430l10 5-13 28-8 7-4-3v-10zM1320 455l12 7M1320 468l-4 5" /><path d="M1314 479h36" strokeWidth="5" /><Caret x={1361} y={455} /></Glyph></Tool>
    <Tool $w={34}><Glyph box={[65, 430, 54, 50]}><path d="M68 434h48v42H68z" strokeDasharray="6 4" stroke="#999" /><path d="M82 450v-5h20v5M92 445v20M87 465h10" /></Glyph></Tool>
    <Tool $w={30}><Glyph box={[167, 426, 50, 54]}><path d="M196 443h-27v32h41v-22" strokeDasharray="6 4" stroke="#999" /><path d="M212 431l-16 24" strokeWidth="5" /><path d="M198 455q-5 12-16 11 5-12 12-14z" fill="#666" stroke="none" /></Glyph></Tool>
    <Tool $w={44}><Glyph box={[257, 428, 88, 52]}><path d="M260 443h42v33h-42zM260 434h42M260 430v8M302 430v8M310 443v33M306 443h8M306 476h8" /><Caret x={335} y={455} /></Glyph></Tool>
    <Divider $w={8} />
    <Tool $w={56}><Glyph box={[428, 432, 92, 48]}><path d="M431 437h10v8h-10zM431 452h10v8h-10zM431 467h10v8h-10zM449 436h38v39h-38z" /><path d="M459 470v-11M468 470v-25M477 470v-18" strokeWidth="5" /><Caret x={512} y={455} /></Glyph></Tool>
    <Divider $w={1} />
    <Tool $w={42}><Glyph box={[602, 428, 48, 52]}><path d="M617 458h-12v-25h41v25h-12M626 445v26" /><path d="M617 465h18l-9 12z" fill="#666" stroke="none" /></Glyph></Tool>
    <ShowMe>
      <svg width="14" height="15" viewBox="0 0 14 15"><path d="M0 0h11v3H0z" fill="#8a719b" /><path d="M0 4h14v3H0z" fill="#7ea3cc" /><path d="M0 8h5v3H0z" fill="#f3a678" /><path d="M0 12h8v3H0z" fill="#f8717f" /></svg>
      Show Me
    </ShowMe>
  </Toolbar>
);

const BLUE = '#76b9ed';
const OfficeIcon = ({ letter, a, b, c }: { letter: string; a: string; b: string; c: string }) => (
  <svg width="24" height="22" viewBox="0 0 24 22"><rect x="6" y="1" width="17" height="20" rx="1.500" fill={a} /><path d="M6 6h17v5H6z" fill={b} /><path d="M6 11h17v8.500q0 1.500-1.500 1.500H6z" fill={c} /><rect x="0" y="5" width="13" height="13" rx="1" fill={c} /><text x="6.500" y="15" fill="#fff" fontSize="10" fontWeight="700" fontFamily="Open Sans, sans-serif" textAnchor="middle">{letter}</text></svg>
);

const WindowsTaskbar = () => (
  <Taskbar>
    <Task $w={48}><FaWindows size={17} /></Task>
    <TaskSearch>
      <svg width="17" height="17" viewBox="0 0 17 17" fill="none" stroke="#222" strokeWidth="1.300"><circle cx="10.500" cy="6.500" r="5" /><path d="M7 10L1 16" /></svg>
      <span>Type here to search</span>
    </TaskSearch>
    <Task $w={48}><svg width="17" height="17"><circle cx="8.500" cy="8.500" r="6.700" fill="none" stroke="#fff" strokeWidth="2" /></svg></Task>
    <Task $w={46}><svg width="17" height="16" viewBox="0 0 17 16" fill="none" stroke="#fff" strokeWidth="1.200"><path d="M1 1v2h10V1M1 15v-2h10v2M1 5h10v6H1zM14.500 1v14" /><path d="M13.500 4h2v3h-2z" fill="#fff" /></svg></Task>
    <Task $w={24}><svg width="5" height="16"><path d="M1 0v16M4 0v16" stroke="#5d7075" /></svg></Task>
    <Task $w={46}><svg width="16" height="24" viewBox="0 0 16 24"><path d="M11 1L2 10l5 5 5 0-5-5 5-5z" fill="#3f8df5" /><path d="M4 23l9-10-4-3-5 0 4 4-4 5z" fill="#42c8f5" /></svg></Task>
    <Task $w={46} $line={BLUE}><svg width="24" height="24" viewBox="0 0 24 24"><defs><linearGradient id="eg" x1="0" x2="1"><stop offset="0" stopColor="#1f9de0" /><stop offset="1" stopColor="#5fdc5a" /></linearGradient></defs><path d="M0 11Q1 0 12 0q12 1 12 10 0 7-8 6-3-1-1-3 1-6-5-6Q3 7 0 12z" fill="url(#eg)" /><path d="M0 11q4-6 10-4-3 2-3 7 1 7 10 6 2 0 4-1-4 5-9 5Q0 24 0 11z" fill="#1573c6" /></svg></Task>
    <Task $w={46}><svg width="24" height="22" viewBox="0 0 24 22"><path d="M0 8L12 0l12 8v13H0z" fill="#0f5ea8" /><path d="M2 7h20v8H2z" fill="#fff" /><path d="M0 8l12 8 12-8v14H0z" fill="#35b8f1" /><path d="M0 22l12-8 12 8z" fill="#1d9be6" /></svg></Task>
    <Task $w={46}><FaDropbox size={24} /></Task>
    <Task $w={45}><svg width="22" height="24" viewBox="0 0 22 24"><path d="M7 7V1.500h8V7" fill="none" stroke="#fff" strokeWidth="1.500" /><path d="M0 6h22v17H0z" fill="#fff" /><path d="M6.500 10h4v4h-4z" fill="#f25022" /><path d="M11.500 10h4v4h-4z" fill="#7fba00" /><path d="M6.500 15h4v4h-4z" fill="#00a4ef" /><path d="M11.500 15h4v4h-4z" fill="#ffb900" /></svg></Task>
    <Task $w={46} $line={BLUE}><svg width="22" height="20" viewBox="0 0 22 20"><path d="M0 1h9l2 3H0z" fill="#dfa21f" /><path d="M0 3.500h22V18H0z" fill="#ffd866" /><path d="M3 10h16v9h-4v-4H7v4H3z" fill="#3f8fd6" /></svg></Task>
    <Task $w={44} $bg="#4b5f66" $line={BLUE}><svg width="24" height="24" viewBox="0 0 24 24"><circle cx="12" cy="12" r="11.500" fill="#dd4b3e" /><path d="M2 6.200L8 16l5 7.500A11.500 11.500 0 0 1 2 6.200z" fill="#1da462" /><path d="M12 6.500h10A11.500 11.500 0 0 1 12.500 23.500L17 14z" fill="#ffcd46" /><circle cx="12" cy="12" r="5.500" fill="#fff" /><circle cx="12" cy="12" r="4.300" fill="#4a8af4" /></svg></Task>
    <Task $w={46} $line={BLUE}><OfficeIcon letter="W" a="#41a5ee" b="#2b7cd3" c="#185abd" /></Task>
    <Task $w={44} $line={BLUE}><OfficeIcon letter="X" a="#33c481" b="#21a366" c="#107c41" /></Task>
    <Task $w={45} $line={BLUE}><svg width="22" height="22" viewBox="0 0 22 22"><rect width="22" height="22" fill="#fff" /><path d="M11 7v8M7 11h8M11 1.500v4M9 3.500h4M11 16.500v4M9 18.500h4M3.500 9v4M1.500 11h4M18.500 9v4M16.500 11h4M5.500 4v4M3.500 6h4M16.500 4v4M14.500 6h4M5.500 14v4M3.500 16h4M16.500 14v4M14.500 16h4" stroke="#4e7fa8" strokeWidth="1.200" /></svg></Task>
    <Task $w={45} $line={BLUE}><svg width="23" height="23" viewBox="0 0 23 23" fill="none" strokeWidth="3" strokeLinecap="round"><circle cx="11.500" cy="11.500" r="11.500" fill="#fff" /><path d="M9.500 5.500v4.500M5.500 9.800h4" stroke="#36c5f0" /><path d="M13.500 5.500v4.500M17.500 9.800h.2" stroke="#2eb67d" /><path d="M13.500 13.500h4M13.500 17.500v.2" stroke="#ecb22e" /><path d="M9.500 13.500v4M5.500 13.500h.2" stroke="#e01e5a" /></svg></Task>
    <Task $w={46} $line={BLUE}><svg width="22" height="19" viewBox="0 0 22 19"><rect width="22" height="19" fill="#111" stroke="#999" /><path d="M0 0h22v3H0z" fill="#ccc" /><text x="2" y="10" fontSize="5.500" fill="#fff" fontFamily="Liberation Mono, monospace">C:\_</text></svg></Task>
    <Task $w={44} $bg="#a8652f" $line="#ff7b00"><svg width="22" height="22" viewBox="0 0 22 22"><path d="M2 1l8 3v17l-8-3z" fill="#e8b548" /><path d="M4 1h10l2 2v15H4z" fill="#ffd978" /><path d="M8 20q-2-4 3-5 2-4 6-1 4 0 5 4 0 2-2 2z" fill="#2f8fe0" /></svg></Task>
    <Task $w={46} $line={BLUE}><svg width="22" height="24" viewBox="0 0 22 24"><path d="M0 0l11 6 11-6v18l-11 6-11-6zM5 8v8l6 4 6-4V8l-6 3z" fill="#c01818" fillRule="evenodd" /></svg></Task>
    <Task $w={48}><svg width="24" height="24" viewBox="0 0 24 24"><circle cx="11" cy="11" r="10" fill="#1b92d1" stroke="#fff" strokeWidth="1.500" /><text x="11" y="17" fontSize="16" fontWeight="700" fill="#fff" textAnchor="middle" fontFamily="Open Sans, sans-serif">?</text><circle cx="19" cy="16.500" r="4.800" fill="#e11b22" /><path d="M19 13.500v3.500M19 18.300v1.200" stroke="#fff" strokeWidth="1.400" /></svg></Task>
    <Task $w={16}><svg width="13" height="8" viewBox="0 0 13 8" fill="none" stroke="#fff" strokeWidth="1.300"><path d="M1 7l5.500-5.500L12 7" /></svg></Task>
    <Task $w={50}><svg width="14" height="14" viewBox="0 0 14 14" fill="none" stroke="#fff" strokeWidth="1.100"><path d="M1 10Q3 3 13 1M3.500 12Q5 6 13 4.500M7 13q1-4 6-5M10 13.500q.5-2 3-2.500" /></svg></Task>
    <Clock>3:34 PM<br />2/13/2021</Clock>
    <Task $w={57}><svg width="24" height="22" viewBox="0 0 24 22"><path d="M1 1h15v12H7l-2 3v-3H1z" fill="#fff" /><path d="M3 4h11M3 7h11M3 10h7" stroke="#1b2942" /><circle cx="15.500" cy="13.500" r="8" fill="#45494c" stroke="#aaa" strokeWidth=".8" /><text x="15.500" y="17" fontSize="9.500" fill="#fff" textAnchor="middle" fontFamily="Open Sans, sans-serif">19</text></svg></Task>
  </Taskbar>
);

const BookGlyph = ({ plus }: { plus?: boolean }) => (
  <svg width={plus ? 16 : 12} height="14" viewBox={plus ? '0 0 16 14' : '0 0 12 14'} fill="none" stroke="#777" strokeWidth="1.100"><path d={plus ? 'M9 10H8l-2 1-2-1H1V1h1.500L6 3l3.500-2H11v6M6 3v8' : 'M1 1.500h1.500L6 3.500l3.500-2H11v9.300H8.500L6 12l-2.500-1.200H1zM6 3.500V12'} />{plus && <path d="M12 7v7M8.500 10.500h7" strokeWidth="1.800" stroke="#666" />}</svg>
);
const DashGlyph = ({ plus }: { plus?: boolean }) => (
  <svg width={plus ? 16 : 11} height="14" viewBox={plus ? '0 0 16 14' : '0 0 11 14'} fill="none" stroke="#777" strokeWidth="1.100"><path d={plus ? 'M8 10H1V1h10v5M6 1v9M1 5.500h10' : 'M.5 2h10v10H.5zM5.500 2v10M.5 7h10'} />{plus && <path d="M12 7v7M8.500 10.500h7" strokeWidth="1.800" stroke="#666" />}</svg>
);

export default function App() {
  const tabs = 'mwzzzjbjbjbffgptsgsjbjbjbjbjbh'.split('');
  const sizes: [string, number][] = [['1', 1.500], ['5,000', 9.700], ['10,000', 14], ['15,000', 17], ['20,818', 20.400]];
  return (
    <Page>
      <Global />
      <TabStrip>
        {tabs.map((t, i) => <BrowserTab key={i} $w={i < 12 ? 35 : 34} $sep={i < tabs.length - 1}>{favicons[t]}</BrowserTab>)}
        <ActiveTab><svg width="10" height="10" viewBox="0 0 10 10" stroke="#333" strokeWidth="1.700"><path d="M1 1l8 8M9 1l-8 8" /></svg></ActiveTab>
        <BrowserTab $w={34} $sep>{favicons.h}</BrowserTab>
        <BrowserTab $w={34} $sep>{favicons.g}</BrowserTab>
        <PlusCell><svg width="12" height="12" stroke="#333" strokeWidth="2"><path d="M6 0v12M0 6h12" /></svg></PlusCell>
        <WindowControls>
          <span><svg width="10" height="10" stroke="#000"><path d="M0 5.500h10" /></svg></span>
          <span><svg width="11" height="11" fill="none" stroke="#000"><path d="M.5 2.500h7v7h-7zM2.500 2V.5h7v7H8" /></svg></span>
          <span><svg width="11" height="11" stroke="#000" strokeWidth="1.100"><path d="M.5 .5l10 10M10.500 .5l-10 10" /></svg></span>
        </WindowControls>
      </TabStrip>
      <AddressBar>
        <NavIcon $w={32}><MdArrowBack size={19} /></NavIcon>
        <NavIcon $w={32} $dim><MdArrowForward size={19} /></NavIcon>
        <NavIcon $w={32}><MdRefresh size={20} /></NavIcon>
        <UrlField>
          <MdLock size={13} />
          <p><b>public.tableau.com</b>/authoring/BenjaminKramskoiCitiBikeAnalysis/MostPopularLocations#1</p>
          <MdStarBorder size={17} />
        </UrlField>
        <ExtensionSlot><MdExtension size={16} /></ExtensionSlot>
        <Avatar>B</Avatar>
        <UpdateButton>Update<svg width="4" height="14" fill="#188038"><circle cx="2" cy="2" r="1.600" /><circle cx="2" cy="7" r="1.600" /><circle cx="2" cy="12" r="1.600" /></svg></UpdateButton>
      </AddressBar>
      <Header>
        <div>
          <HeaderTitle>BenjaminKramskoiCitiBikeAnalysis (Tableau Public)</HeaderTitle>
          <Menu>{['File', 'Data', 'Worksheet', 'Dashboard', 'Analysis', 'Map', 'Format', 'Help'].map(m => <span key={m}>{m}</span>)}</Menu>
        </div>
        <HeaderRight>
          <svg width="12" height="12" stroke="#c9cad0" strokeWidth="1.500"><path d="M1 1l10 10M11 1L1 11" /></svg>
          <span>Benjamin Kramskoi</span>
        </HeaderRight>
      </Header>
      <AppToolbar />
      <Work>
        <DataPane>
          <PaneTabs>
            <PaneTab $on>Data</PaneTab>
            <PaneTab>Analytics<svg width="7" height="11" viewBox="0 0 7 11" fill="none" stroke="#555" strokeWidth="1.300"><path d="M6 1L1.500 5.500 6 10" /></svg></PaneTab>
          </PaneTabs>
          <SourceRow>
            <svg width="17" height="16" viewBox="0 0 17 16" fill="none" stroke="#777"><path d="M1 3v9l3 2M1 3q4-4 8 0l2 1" /><ellipse cx="8" cy="5.500" rx="4.500" ry="2" /><path d="M3.500 5.500v8l3 1.500M12.500 5.500V8M3.500 9q3 3 6 1" /><circle cx="12.500" cy="12.300" r="3.500" fill="#3a7ca5" stroke="none" /><path d="M10.800 12.300l1.300 1.200 2-2.400" stroke="#fff" /></svg>
            JC-201811-citibike-tri...
          </SourceRow>
          <SearchRow>
            <SearchBox><svg width="13" height="13" viewBox="0 0 13 13" fill="none" stroke="#666" strokeWidth="1.100"><circle cx="8" cy="5" r="4.200" /><path d="M5 8.200L.7 12.500" /></svg>Search</SearchBox>
            <svg width="18" height="12" viewBox="0 0 18 12" fill="none" stroke="#666" strokeWidth="1.100"><path d="M.8 1h10L7.200 5.500V10L4.500 8.500v-3z" /><path d="M13 4h5l-2.500 3z" fill="#666" stroke="none" /></svg>
            <Stroke />
            <svg width="7" height="5"><path d="M0 .5h7L3.500 4.500z" fill="#555" /></svg>
          </SearchRow>
          <TablesTitle>Tables</TablesTitle>
          {dims.map(([k, t]) => <Field key={t} $italic={k === 'i'}><span>{fieldIcon(k, '#3f7f9f')}</span>{t}</Field>)}
          <FieldRule />
          {measures.map(([k, t]) => <Field key={t}><span>{fieldIcon(k, '#3ba37f')}</span>{t}</Field>)}
        </DataPane>

        <Cards>
          <Card $h={46}><CardTitle><ChevronUp />Pages</CardTitle></Card>
          <Card $h={46}><CardTitle><ChevronUp />Filters</CardTitle></Card>
          <Card $h={236}>
            <CardTitle><ChevronUp />Marks</CardTitle>
            <MarkType>
              <svg width="10" height="10"><circle cx="5" cy="5" r="4.300" fill="none" stroke="#666" strokeWidth="1.200" /></svg>Automatic
              <DropCell><svg width="8" height="6"><path d="M0 .5h8L4 5.500z" fill="#555" /></svg></DropCell>
            </MarkType>
            <MarkGrid>
              <MarkButton><ColorGlyph />Color</MarkButton>
              <MarkButton><SizeGlyph />Size</MarkButton>
              <MarkButton><svg width="14" height="16" viewBox="0 0 14 16" fill="none" stroke="#666"><path d="M.5 2.500h13v11H.5z" /><path d="M4.500 7V5.500h5V7M7 5.500v5M5.500 10.500h3" /></svg>Label</MarkButton>
              <MarkButton><svg width="16" height="16" viewBox="0 0 16 16" fill="none" stroke="#666"><circle cx="8" cy="5" r="1.700" fill="#666" /><circle cx="3" cy="11" r="1.600" /><circle cx="8" cy="11" r="1.600" /><circle cx="13" cy="11" r="1.600" /></svg>Detail</MarkButton>
              <MarkButton><svg width="16" height="16" viewBox="0 0 16 16" fill="none" stroke="#666" strokeWidth="1.100"><path d="M1.500 2.500h13v8h-3v4l-4-4h-6z" /></svg>Tooltip</MarkButton>
            </MarkGrid>
            <MarkPills>
              <MarkPillRow><ColorGlyph /><Pill $w={138}>CNT(bikeid)</Pill></MarkPillRow>
              <MarkPillRow><SizeGlyph /><Pill $w={138}>CNT(bikeid)</Pill></MarkPillRow>
            </MarkPills>
          </Card>
        </Cards>

        <Main>
          <Shelf>
            <ShelfName><svg width="13" height="12" fill="#666"><path d="M1 0h2v2H1zM1 3h2v9H1zM5 0h2v2H5zM5 3h2v9H5zM9 0h2v2H9zM9 3h2v9H9z" /></svg>Columns</ShelfName>
            <Pill $w={150}>End Station Longitude</Pill>
          </Shelf>
          <Shelf>
            <ShelfName><svg width="13" height="10" fill="#666"><path d="M0 0h2v2H0zM3 0h9v2H3zM0 4h2v2H0zM3 4h9v2H3zM0 8h2v2H0zM3 8h9v2H3z" /></svg>Rows</ShelfName>
            <Pill $w={150}>End Station Latitude</Pill>
          </Shelf>
          <Canvas>
            <Sheet>
              <SheetTitle>
                MostPopularLocations<br />
                The most popular locations in this data set are near Grand Street. This makes sense<br />
                as there are a lot of streets in that area where people are able to ride their bicycles.
              </SheetTitle>
              <MapBox>
                <MapSvg />
                <MapTools>
                  <MapToolGroup $h={28}><svg width="26" height="26" viewBox="0 0 26 26" fill="none" stroke="#666" strokeWidth="1.200"><circle cx="14" cy="12" r="4.500" /><path d="M11 15.500L7.500 19" /></svg></MapToolGroup>
                  <MapToolGroup $h={103}><svg width="26" height="101" viewBox="0 0 26 101" fill="none" stroke="#666" strokeWidth="1.800"><path d="M13 9v10M8 14h10M8 36h10" /><path d="M6.500 59l6.500-6.500 6.500 6.500M8.500 58v6.500h9V58M11.500 64v-4h3v4" strokeWidth="1" /><path d="M0 73.500h26" stroke="#ddd" strokeWidth="1" /><path d="M10.500 82v10l6-5z" fill="#666" stroke="none" /></svg></MapToolGroup>
                </MapTools>
                <Credits>© 2021 Mapbox  © OpenStreetMap</Credits>
              </MapBox>
            </Sheet>
            <Legends>
              <Legend $h={127}>
                <LegendTitle>Count of bikeid</LegendTitle>
                {sizes.map(([t, r]) => (
                  <SizeRow key={t}><svg width="42" height="18" viewBox="0 0 42 18"><circle cx="21" cy="9" r={r} fill="#d6d6d6" stroke="#b3b3b3" strokeWidth="1.300" /></svg><span>{t}</span></SizeRow>
                ))}
              </Legend>
              <Legend $h={68}>
                <LegendTitle>Count of bikeid</LegendTitle>
                <Ramp />
                <svg width="146" height="3"><path d="M60.500 0v3" stroke="#000" /></svg>
                <RampLabels><span>1</span><span>20,818</span></RampLabels>
              </Legend>
            </Legends>
          </Canvas>
        </Main>
      </Work>
      <SheetTabs>
        <SheetTab $w={105}>GenderByCount</SheetTab>
        <SheetTab $w={142} $on>MostPopularLocations</SheetTab>
        <SheetTab $w={96}>Top10Stations</SheetTab>
        <SheetTab $w={166}>PeakHoursinWinterMonths</SheetTab>
        <SheetTab $w={73}><BookGlyph />Story 1</SheetTab>
        <SheetTab $w={104}><DashGlyph />Dashboard 1</SheetTab>
        <SheetTab $w={128}>BikerCountbyMonth</SheetTab>
        <SheetTab $w={165}>AverageTripDurationbyAge</SheetTab>
        <SheetTab $w={32}><svg width="16" height="14" viewBox="0 0 16 14" fill="none" stroke="#777" strokeWidth="1.100"><path d="M8 10H1V1h10v5M3.500 8V6M6 8V3.500M8.500 7V5" /><path d="M12 7v7M8.500 10.500h7" strokeWidth="1.800" stroke="#666" /></svg></SheetTab>
        <SheetTab $w={32}><DashGlyph plus /></SheetTab>
        <SheetTab $w={32}><BookGlyph plus /></SheetTab>
      </SheetTabs>
      <Status><span>71 marks</span><span>1 row by 1 column</span><span>SUM of CNT(bikeid): 140,018</span></Status>
      <WindowsTaskbar />
    </Page>
  );
}
